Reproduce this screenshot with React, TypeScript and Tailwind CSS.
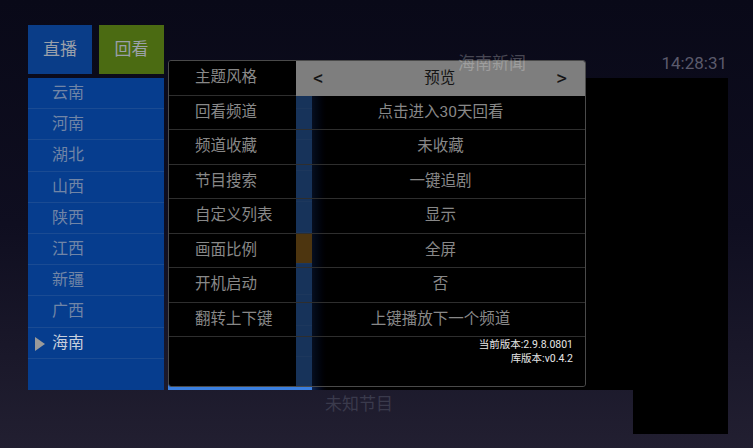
const FONT = 'font-["Roboto","Noto_Sans_CJK_SC",sans-serif]';

const provinces = ['云南', '河南', '湖北', '山西', '陕西', '江西', '新疆', '广西', '海南'];

const settings: { label: string; value: string }[] = [
  { label: '主题风格', value: '预览' },
  { label: '回看频道', value: '点击进入30天回看' },
  { label: '频道收藏', value: '未收藏' },
  { label: '节目搜索', value: '一键追剧' },
  { label: '自定义列表', value: '显示' },
  { label: '画面比例', value: '全屏' },
  { label: '开机启动', value: '否' },
  { label: '翻转上下键', value: '上键播放下一个频道' },
];

function SettingsDialog() {
  return (
    <div className="absolute left-[168px] top-[60px] z-10 flex h-[327px] w-[418px] overflow-hidden rounded-[3px] border border-[#4a4a4a]">
      {/* labels */}
      <div className="flex w-[127px] shrink-0 flex-col bg-black">
        {settings.map((s) => (
          <div key={s.label} className="flex h-[34.5px] items-center border-b border-[#2e2e2e] pl-[26px] text-[15.5px] text-[#888888]">
            {s.label}
          </div>
        ))}
      </div>
      {/* values */}
      <div className="flex flex-1 flex-col bg-black/60">
        {settings.map((s, i) =>
          i === 0 ? (
            <div key={s.label} className="flex h-[34.5px] items-center justify-between bg-[#7e7e7e] pl-[17px] pr-[18px] text-[#141414]">
              <span className="text-[21px] leading-none">&lt;</span>
              <span className="text-[15.5px]">{s.value}</span>
              <span className="text-[21px] leading-none">&gt;</span>
            </div>
          ) : (
            <div key={s.label} className="flex h-[34.5px] items-center justify-center border-b border-[#2e2e2e] text-[15.5px] text-[#888888]">
              {s.value}
            </div>
          )
        )}
        <div className="flex flex-1 flex-col items-end pr-[12px] pt-[1px] text-[10.5px] leading-[14px] text-[#e6e6e6]">
          <span>当前版本:2.9.8.0801</span>
          <span>库版本:v0.4.2</span>
        </div>
      </div>
    </div>
  );
}

export default function App() {
  return (
    <div className={`relative h-[448px] w-[753px] overflow-hidden bg-gradient-to-b from-[#090918] via-[#0f0e20] to-[#221f31] ${FONT}`}>
      <div className="flex pl-[28px] pt-[25px]">
        {/* left: tabs + provinces */}
        <div className="flex w-[136px] flex-col">
          <div className="flex h-[49px] gap-[7px] text-[17px] text-[#9aa0aa]">
            <div className="flex w-[64px] items-center justify-center bg-[#0a3d88]">直播</div>
            <div className="flex flex-1 items-center justify-center bg-[#4b6b12]">回看</div>
          </div>
          <div className="mt-[4px] h-[312px] bg-[#063d8e]">
            {provinces.map((p, i) => {
              const active = i === provinces.length - 1;
              return (
                <div key={p} className="relative flex h-[31.2px] items-center border-b border-[#1a4b93] pl-[24px] text-[16px]">
                  {active && (
                    <span className="absolute left-[7px] top-[9px] h-0 w-0 border-y-[7px] border-l-[10px] border-y-transparent border-l-[#9a9a9a]" />
                  )}
                  <span className={active ? 'text-[#c8cfdc]' : 'text-[#7185a6]'}>{p}</span>
                </div>
              );
            })}
          </div>
        </div>

        {/* right: title, channels, video */}
        <div className="ml-[4px] flex w-[560px] flex-col">
          <div className="flex h-[53px] items-end pb-[2px] text-[17px]">
            <span className="relative z-20 ml-[290px] text-white/25">海南新闻</span>
            <span className="ml-auto pr-[1px] text-[#5b5a6c]">14:28:31</span>
          </div>
          <div className="flex h-[312px]">
            <div className="relative w-[144px] bg-[#3a7fe0]">
              {Array.from({ length: 9 }).map((_, i) => (
                <div key={i} className={`h-[31px] border-b border-[#4a8ae6] ${i === 5 ? 'bg-[#c08526]' : ''}`} />
              ))}
            </div>
            <div className="w-[18px] bg-gradient-to-r from-[#10244f] to-black" />
            <div className="flex-1 bg-black" />
          </div>
          <div className="flex h-[44px]">
            <span className="ml-[157px] mt-[2px] text-[17px] text-[#3a3a4c]">未知节目</span>
            <div className="ml-auto w-[95px] bg-black" />
          </div>
        </div>
      </div>

      <SettingsDialog />
    </div>
  );
}
